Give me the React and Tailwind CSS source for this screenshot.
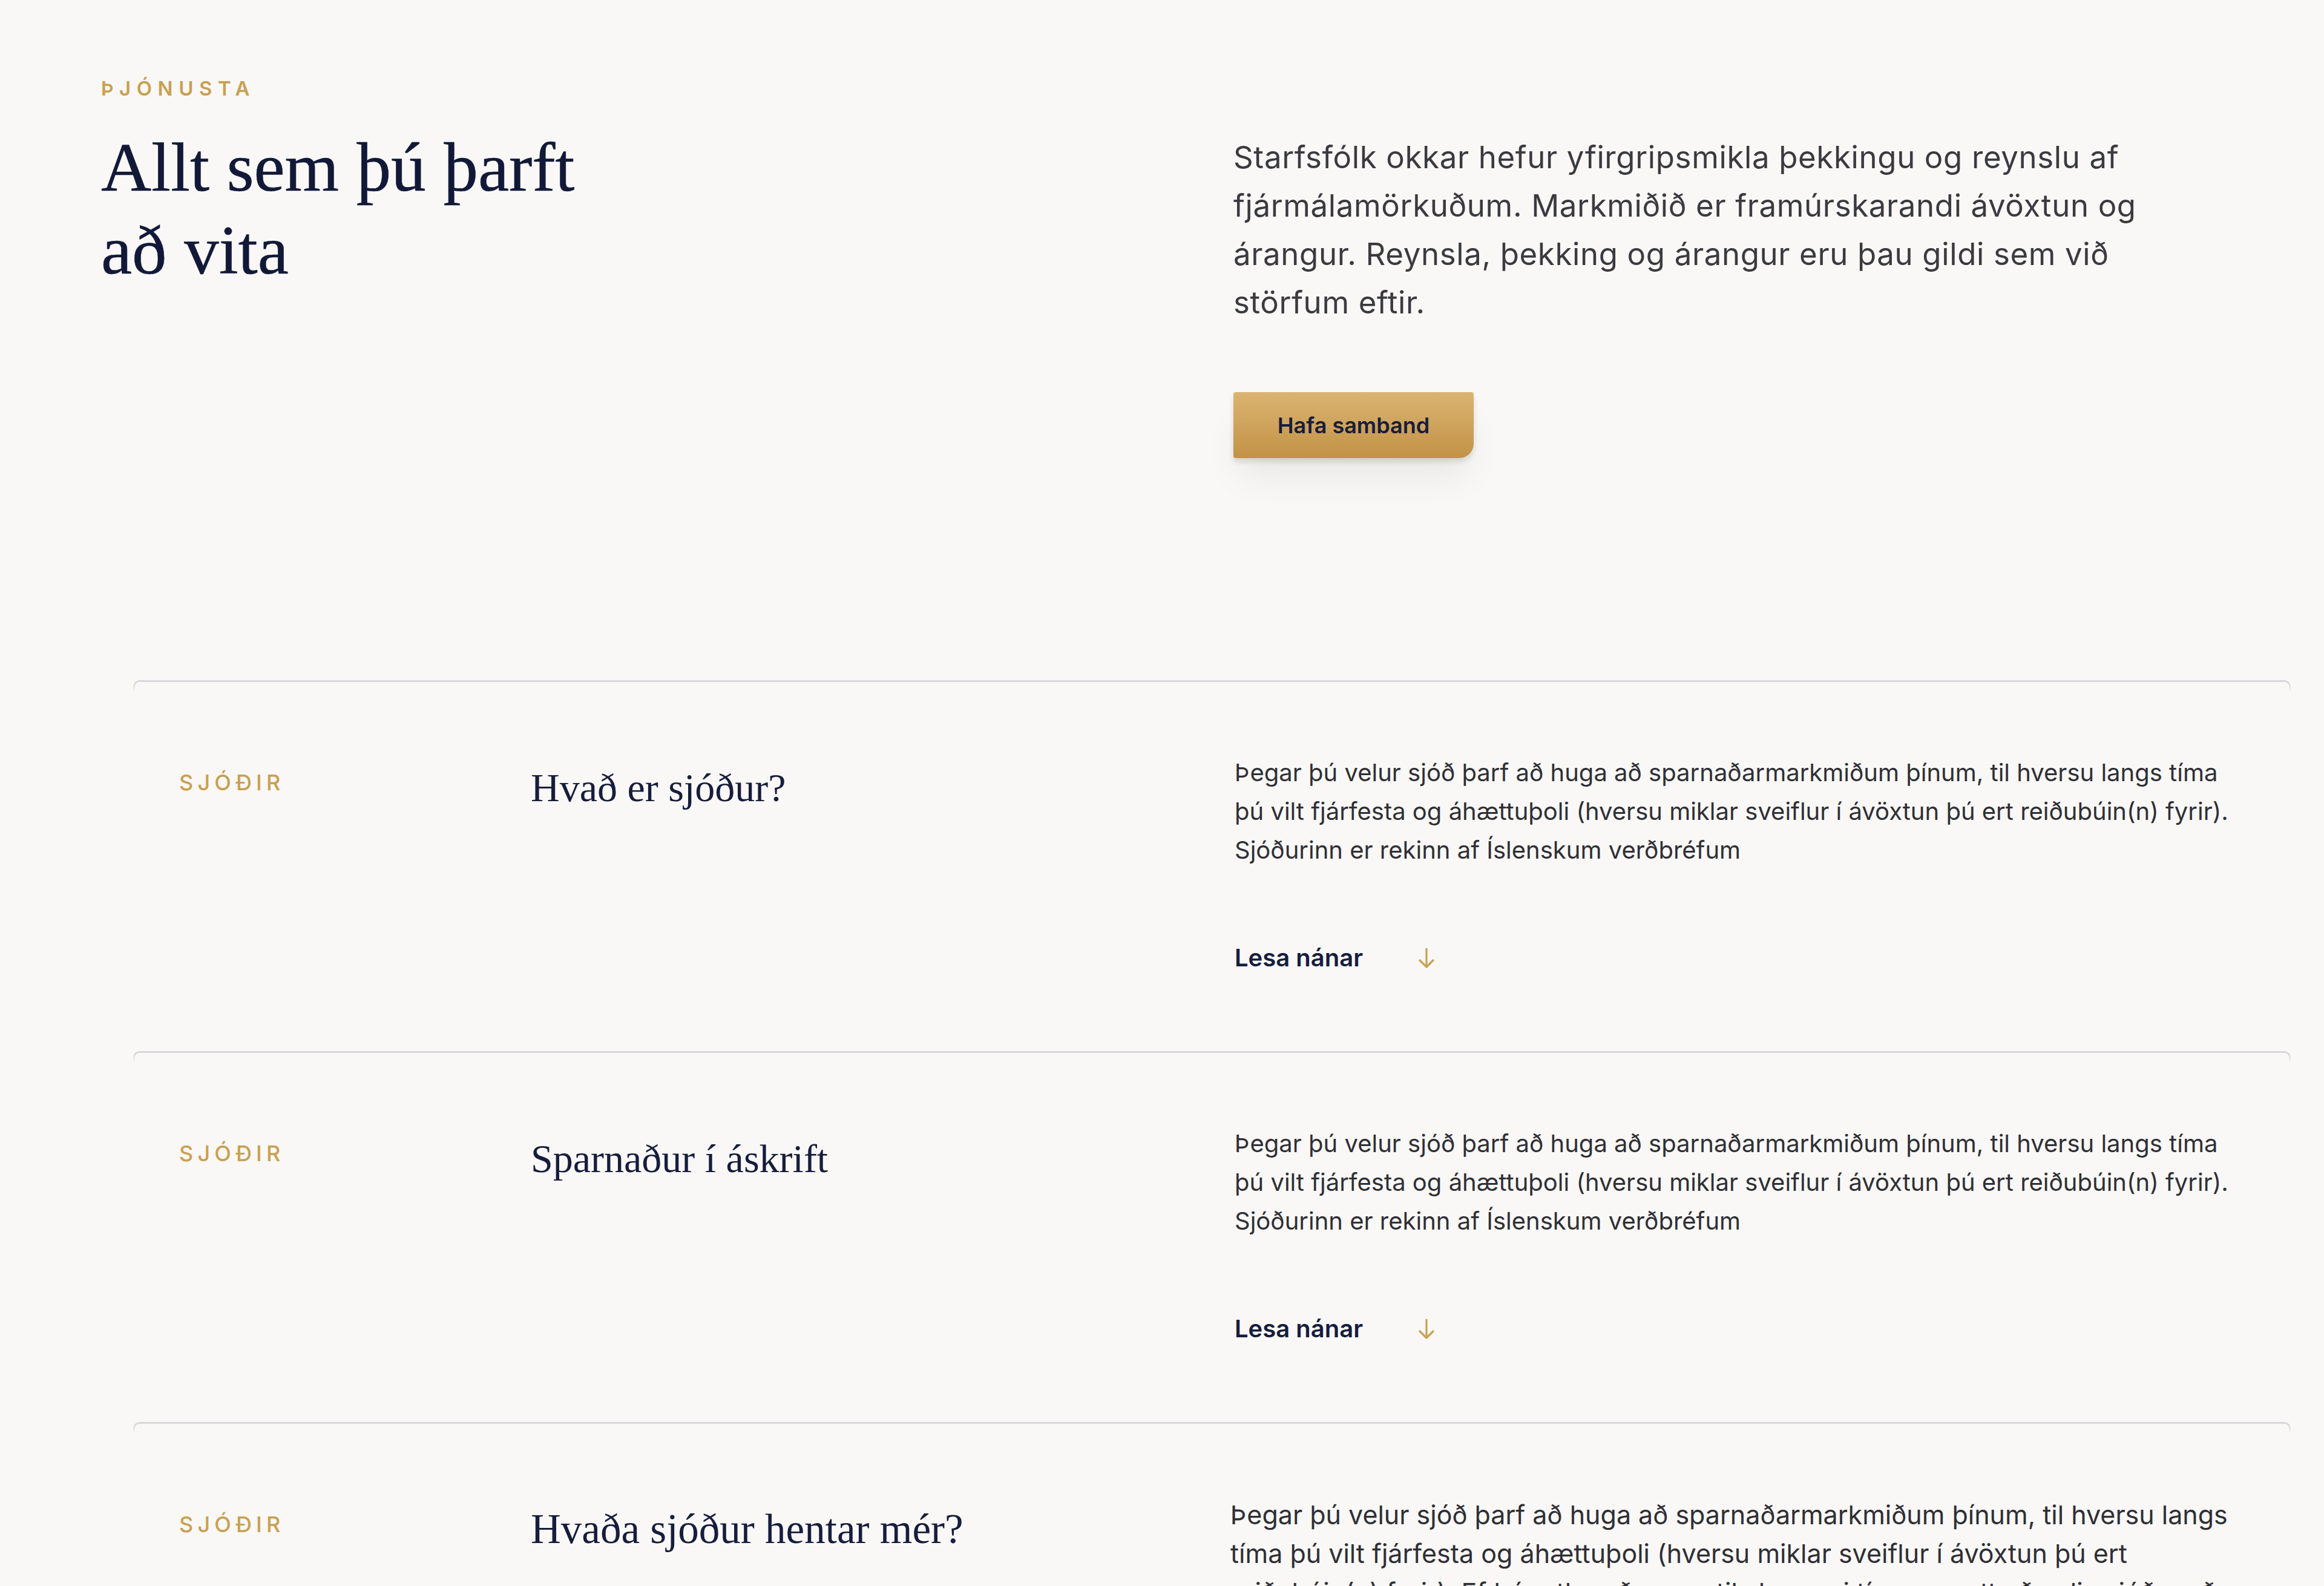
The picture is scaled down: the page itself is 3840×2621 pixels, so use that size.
const rows = [
  {
    tag: 'SJÓÐIR',
    title: 'Hvað er sjóður?',
    body: 'Þegar þú velur sjóð þarf að huga að sparnaðarmarkmiðum þínum, til hversu langs tíma þú vilt fjárfesta og áhættuþoli (hversu miklar sveiflur í ávöxtun þú ert reiðubúin(n) fyrir). Sjóðurinn er rekinn af Íslenskum verðbréfum',
  },
  {
    tag: 'SJÓÐIR',
    title: 'Sparnaður í áskrift',
    body: 'Þegar þú velur sjóð þarf að huga að sparnaðarmarkmiðum þínum, til hversu langs tíma þú vilt fjárfesta og áhættuþoli (hversu miklar sveiflur í ávöxtun þú ert reiðubúin(n) fyrir). Sjóðurinn er rekinn af Íslenskum verðbréfum',
  },
  {
    tag: 'SJÓÐIR',
    title: 'Hvaða sjóður hentar mér?',
    body: 'Þegar þú velur sjóð þarf að huga að sparnaðarmarkmiðum þínum, til hversu langs tíma þú vilt fjárfesta og áhættuþoli (hversu miklar sveiflur í ávöxtun þú ert reiðubúin(n) fyrir). Ef þú ætlar að spara til skemmri tíma er gott að velja sjóð með litlum sveiflum.',
    large: true,
  },
];

function ArrowDownIcon() {
  return (
    <svg width="30" height="34" viewBox="0 0 30 34" fill="none" stroke="#c9a052" strokeWidth="3.2" strokeLinecap="round" strokeLinejoin="round">
      <path d="M15 2v29" />
      <path d="M4 21l11 11 11-11" />
    </svg>
  );
}

function Row({ row }) {
  return (
    <div>
      {/* top rule with rounded corners, sides fade out */}
      <div className="h-[18px] rounded-t-[10px] border-x-[3px] border-t-[3px] border-[#d8d8dd] [mask-image:linear-gradient(to_bottom,black_30%,transparent)]" />
      <div className="flex items-start pl-[76px] pb-[134px]">
        <div className="w-[581px] shrink-0 mt-[133px] text-[36px] leading-none font-medium tracking-[0.2em] text-[#c9a052]">
          {row.tag}
        </div>
        <h3 className={`w-[1163px] shrink-0 leading-none text-[#161d3d] font-['Liberation_Serif',serif] ${row.large ? 'mt-[125px] text-[69px]' : 'mt-[127px] text-[66px]'}`}>
          {row.title}
        </h3>
        <div className={row.large ? 'w-[1680px] -ml-[7px]' : 'w-[1680px]'}>
          <p className={`mt-[103px] leading-[64px] text-[#2f2f35] ${row.large ? 'text-[43px]' : 'text-[40px]'}`}>
            {row.body}
          </p>
          <a href="#" className="mt-[126px] flex items-center h-[40px] gap-[90px] text-[40px] leading-none font-semibold text-[#161d3d]">
            Lesa nánar
            <ArrowDownIcon />
          </a>
        </div>
      </div>
    </div>
  );
}

export default function App() {
  return (
    <div className="min-h-screen bg-[#f9f8f6] font-['Inter',sans-serif] overflow-hidden">
      {/* Intro */}
      <section className="flex pl-[167px] pt-[130px]">
        <div className="w-[1871px] shrink-0">
          <div className="text-[33px] leading-none font-semibold tracking-[0.29em] text-[#c9a052]">ÞJÓNUSTA</div>
          <h1 className="mt-[45px] text-[115px] leading-[137px] text-[#121938] font-['Liberation_Serif',serif] [-webkit-text-stroke:0.6px_#121938]">
            Allt sem þú þarft
            <br />
            að vita
          </h1>
        </div>
        <div className="w-[1610px]">
          <p className="mt-[90px] text-[51px] leading-[80px] tracking-[0.012em] text-[#3a3a40]">
            Starfsfólk okkar hefur yfirgripsmikla þekkingu og reynslu af fjármálamörkuðum. Markmiðið er framúrskarandi ávöxtun og árangur. Reynsla, þekking og árangur eru þau gildi sem við störfum eftir.
          </p>
          <button className="mt-[108px] h-[109px] w-[397px] rounded-[4px] rounded-br-[24px] bg-gradient-to-b from-[#dbb471] to-[#c29246] text-[36px] font-semibold text-[#161d3d] shadow-[0_6px_10px_rgba(0,0,0,0.12),0_40px_60px_-10px_rgba(0,0,0,0.07)]">
            Hafa samband
          </button>
        </div>
      </section>

      {/* Service rows */}
      <section className="mt-[367px] ml-[220px] mr-[55px]">
        {rows.map((row, i) => (
          <Row key={i} row={row} />
        ))}
      </section>
    </div>
  );
}
